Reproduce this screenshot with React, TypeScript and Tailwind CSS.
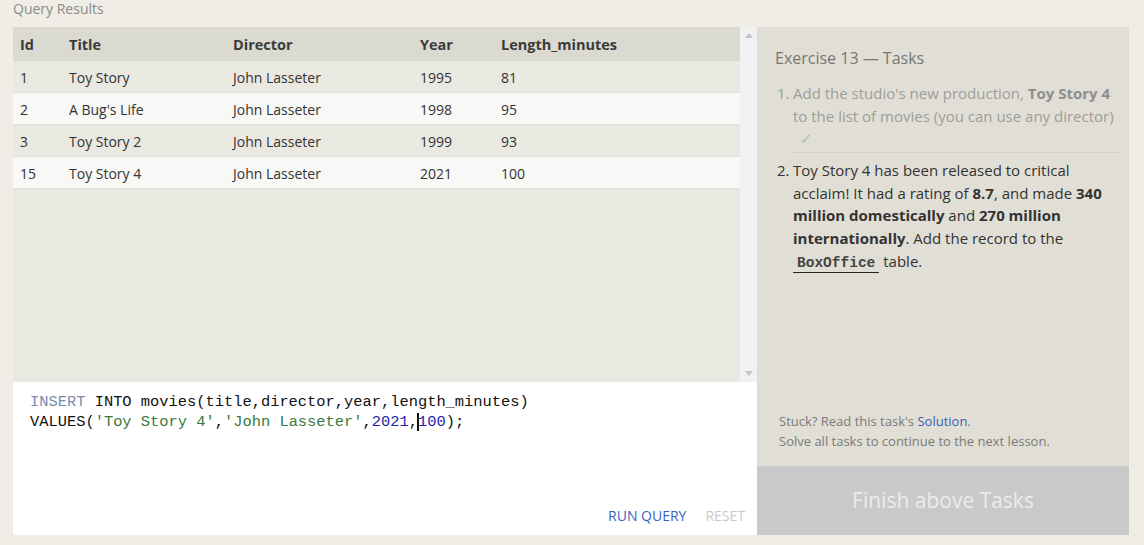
import React from "react";

const rows = [
  { id: "1", title: "Toy Story", director: "John Lasseter", year: "1995", len: "81" },
  { id: "2", title: "A Bug's Life", director: "John Lasseter", year: "1998", len: "95" },
  { id: "3", title: "Toy Story 2", director: "John Lasseter", year: "1999", len: "93" },
  { id: "15", title: "Toy Story 4", director: "John Lasseter", year: "2021", len: "100" },
];

function Row({ r, i }: { r: (typeof rows)[number]; i: number }) {
  return (
    <div
      className={`flex h-[32px] items-center pt-[2px] text-[14px] text-[#333] border-b border-[#e2e1da] ${
        i % 2 === 0 ? "bg-[#e9e8e1]" : "bg-[#f8f8f6]"
      }`}
    >
      <div className="w-[56px] pl-[7px]">{r.id}</div>
      <div className="w-[164px]">{r.title}</div>
      <div className="w-[187px]">{r.director}</div>
      <div className="w-[81px]">{r.year}</div>
      <div className="flex-1">{r.len}</div>
    </div>
  );
}

export default function App() {
  return (
    <div
      className="w-[1144px] h-[545px] bg-[#efede6] overflow-hidden"
      style={{ fontFamily: '"Open Sans", "Noto Sans", sans-serif' }}
    >
      <div className="h-[27px] pl-[13px] text-[14px] leading-[18px] text-[#8a8a86]">Query Results</div>
      <div className="flex ml-[13px] w-[1116px] h-[508px]">
        {/* left */}
        <div className="w-[744px] flex flex-col">
          <div className="flex h-[355px]">
            <div className="flex-1 bg-[#e9e8e1]">
              <div className="flex h-[34px] items-center pt-[2px] bg-[#dbdad1] text-[14.5px] font-bold text-[#3a3a3a]">
                <div className="w-[56px] pl-[7px]">Id</div>
                <div className="w-[164px]">Title</div>
                <div className="w-[187px]">Director</div>
                <div className="w-[81px]">Year</div>
                <div className="flex-1">Length_minutes</div>
              </div>
              {rows.map((r, i) => (
                <Row key={r.id} r={r} i={i} />
              ))}
            </div>
            <div className="w-[17px] bg-[#f1f1f1] flex flex-col justify-between items-center py-[6px]">
              <svg width="8" height="5" viewBox="0 0 8 5">
                <path d="M0 5 L4 0 L8 5 Z" fill="#c4c4c4" />
              </svg>
              <svg width="8" height="5" viewBox="0 0 8 5">
                <path d="M0 0 L4 5 L8 0 Z" fill="#c4c4c4" />
              </svg>
            </div>
          </div>
          <div className="flex-1 bg-white flex flex-col">
            <div
              className="pl-[17px] pt-[10px] text-[15.4px] leading-[20px] text-[#111] whitespace-pre"
              style={{ fontFamily: '"Liberation Mono", "DejaVu Sans Mono", monospace' }}
            >
              <div>
                <span className="text-[#7a8bb0]">INSERT</span> INTO movies(title,director,year,length_minutes)
              </div>
              <div>
                VALUES(<span className="text-[#3b7a3b]">'Toy Story 4'</span>,
                <span className="text-[#3b7a3b]">'John Lasseter'</span>,
                <span className="text-[#1e1eaa]">2021</span>,
                <span className="border-l-[2px] border-[#111] -ml-[1px]"></span>
                <span className="text-[#1e1eaa] -ml-[1px]">100</span>);
              </div>
            </div>
            <div className="mt-auto flex justify-end gap-[19px] pr-[12px] pb-[9px] text-[14px]">
              <span className="text-[#3b5fc0]">RUN QUERY</span>
              <span className="text-[#c9c9c9]">RESET</span>
            </div>
          </div>
        </div>
        {/* right */}
        <div className="w-[372px] flex flex-col bg-[#e1dfd5]">
          <div className="flex-1 flex flex-col pl-[18px] pr-[8px]">
            <div className="pt-[20px] text-[16px] text-[#777] leading-[22px]">Exercise 13 — Tasks</div>
            <div className="mt-[13px] text-[15px] leading-[22.6px]">
              <div className="flex text-[#9d9d9d]">
                <div className="w-[18px] pl-[2px]">1.</div>
                <div className="flex-1 border-b border-[#d2d0c6] pb-[3px]">
                  Add the studio's new production, <b className="text-[#8e8e8e]">Toy Story 4</b> to the list of movies
                  (you can use any director)
                  <div className="text-[#9fc49f] pl-[7px] leading-[22px]">✓</div>
                </div>
              </div>
              <div className="flex text-[#333] mt-[6px]">
                <div className="w-[18px] pl-[2px]">2.</div>
                <div className="flex-1 pr-[8px]">
                  Toy Story 4 has been released to critical acclaim! It had a rating of <b>8.7</b>, and made{" "}
                  <b>340 million domestically</b> and <b>270 million internationally</b>. Add the record to the{" "}
                  <code
                    className="font-bold text-[14.5px] px-[4px] pb-[1px] border-b border-[#222] text-[#444]"
                    style={{ fontFamily: '"Liberation Mono", "DejaVu Sans Mono", monospace' }}
                  >
                    BoxOffice
                  </code>{" "}
                  table.
                </div>
              </div>
            </div>
            <div className="mt-auto pb-[15px] pl-[4px] text-[13px] leading-[20px] text-[#7a7a7a]">
              <div>
                Stuck? Read this task's <span className="text-[#3d5bb8]">Solution</span>.
              </div>
              <div>Solve all tasks to continue to the next lesson.</div>
            </div>
          </div>
          <div className="h-[69px] bg-[#c9c9c9] flex items-center justify-center text-[21px] text-[#ececec]">
            Finish above Tasks
          </div>
        </div>
      </div>
    </div>
  );
}
